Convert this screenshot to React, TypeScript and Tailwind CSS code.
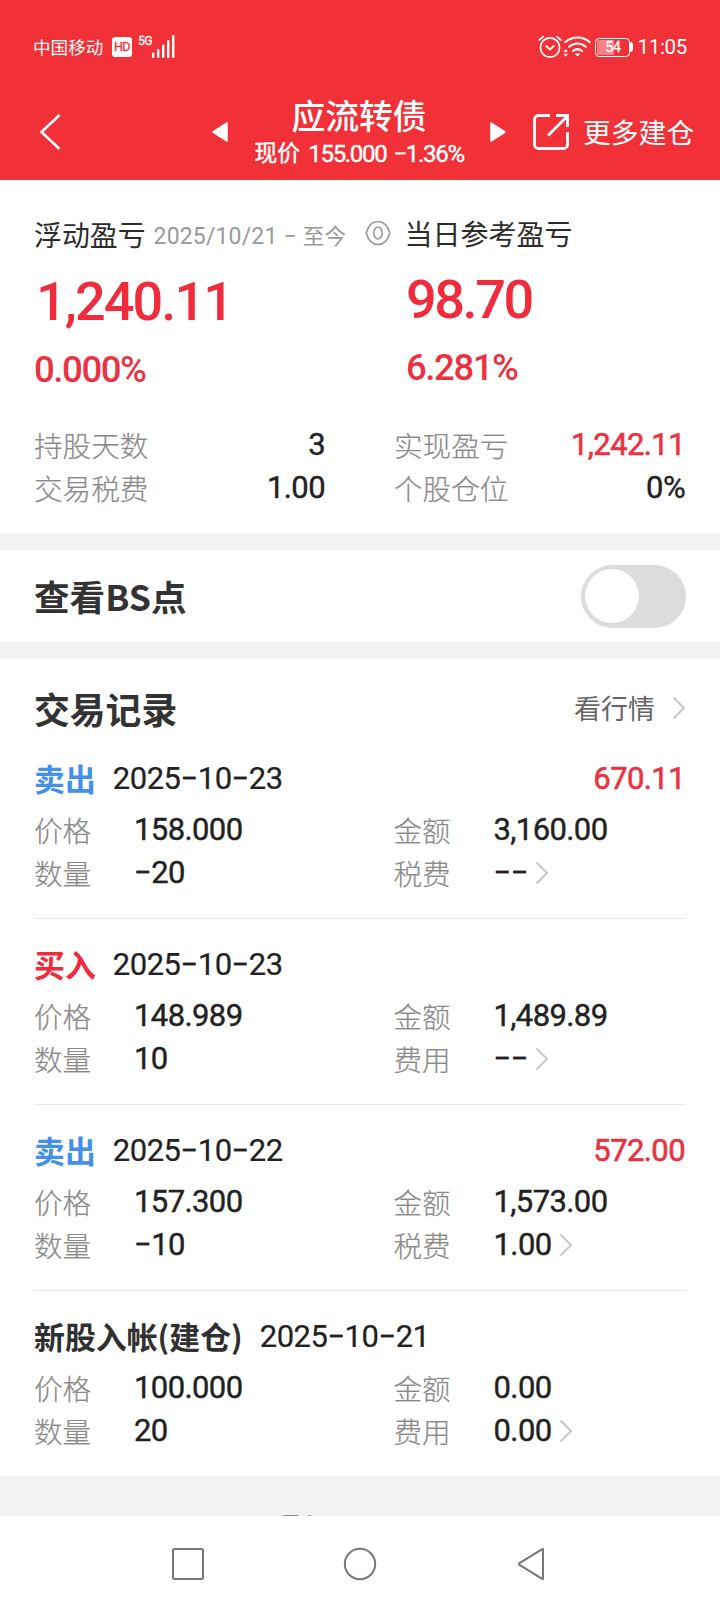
import type { ReactNode } from "react";

const num = "font-['Roboto','Noto_Sans_CJK_SC',sans-serif]";

function Chevron({ className = "" }: { className?: string }) {
  return (
    <svg viewBox="0 0 14 24" className={`h-6 w-3.5 shrink-0 ${className}`} fill="none" stroke="#c8c8c8" strokeWidth="2">
      <path d="M1.5 1.5 12 12 1.5 22.5" />
    </svg>
  );
}

function StatusBar() {
  return (
    <div className="flex h-[94px] items-center pr-[33px] pl-[33px]">
      <span className="text-[17.6px] leading-6">中国移动</span>
      <span className={`ml-[8.6px] flex size-5 items-center justify-center rounded-[3px] bg-white text-[12.5px] tracking-[-0.5px] text-[#f23037] [-webkit-text-stroke:0.3px] ${num}`}>HD</span>
      <span className={`-mt-[13px] ml-[6px] w-[15px] text-[12px] leading-3 tracking-[-0.5px] [-webkit-text-stroke:0.3px] ${num}`}>5G</span>
      <svg viewBox="0 0 24 24" className="-ml-[2px] size-6" fill="white">
        <rect x="1" y="17.5" width="2.4" height="5.5" rx="1" />
        <rect x="6" y="14" width="2.4" height="9" rx="1" />
        <rect x="11" y="9.5" width="2.4" height="13.5" rx="1" />
        <rect x="16" y="5" width="2.4" height="18" rx="1" />
        <rect x="21" y="0" width="2.4" height="23" rx="1" />
      </svg>
      <div className="ml-auto flex items-center">
        <svg viewBox="0 0 24 24" className="mr-px size-6" fill="none" stroke="white" strokeWidth="1.7" strokeLinecap="round">
          <circle cx="12" cy="12.5" r="9.6" />
          <path d="M8.2 11 12 14.500l3.800-3.500M1.200 5 5.200 1.600M22.800 5 18.800 1.600" />
        </svg>
        <svg viewBox="0 0 28 24" className="h-6 w-7" fill="none" stroke="white" strokeWidth="2" strokeLinecap="round">
          <path d="M2.2 7.2c7-6.4 17.600-6.400 24.600 0M6.200 11.800c5-4.500 11.600-4.500 16.600 0M10 16c3-2.500 6-2.500 9 0" />
          <path d="M11.500 18.400h6l-3 3z" fill="white" stroke="none" />
          <path d="M0.500 17l2.200-2.900 2.200 2.900zM0.500 18.800l2.200 2.900 2.200-2.900z" fill="white" stroke="none" />
        </svg>
        <div className="ml-[4px] flex h-[19px] w-[35px] rounded-[4px] border-[1.5px] border-white p-px">
          <div className={`flex w-full items-center justify-center rounded-[2px] bg-[linear-gradient(90deg,#f98185_56%,transparent_56%)] text-[14px] leading-none tracking-[-0.3px] [-webkit-text-stroke:0.3px] ${num}`}>54</div>
        </div>
        <div className="h-2.5 w-[3px] rounded-r-sm bg-white" />
        <span className={`ml-[4px] text-[20.5px] leading-6 tracking-[-0.3px] ${num}`}>11:05</span>
      </div>
    </div>
  );
}

function TitleBar() {
  return (
    <div className="flex h-[86px] items-center pr-6 pl-[39px]">
      <svg viewBox="0 0 22 38" className="mt-[-10px] h-[38px] w-[22px]" fill="none" stroke="white" strokeWidth="2.6">
        <path d="M20.5 2 2.5 19l18 17" />
      </svg>
      <svg viewBox="0 0 16 20" className="mt-[-11px] ml-[151px] h-5 w-4" fill="white" stroke="white" strokeWidth="1.5" strokeLinejoin="round">
        <path d="M15 1v18L1 10z" />
      </svg>
      <div className="mt-[-8px] flex w-[262px] flex-col items-center">
        <h1 className="text-[33.8px] leading-[40px] font-medium">应流转债</h1>
        <p className={`mt-px flex text-[24px] leading-[36px] tracking-[-1.3px] whitespace-pre [-webkit-text-stroke:0.4px] ${num}`}>
          <span className="mr-[8px] text-[23px] tracking-normal">现价</span>155.000<span className="ml-[7px]">−1.36%</span>
        </p>
      </div>
      <svg viewBox="0 0 16 20" className="mt-[-11px] h-5 w-4" fill="white" stroke="white" strokeWidth="1.5" strokeLinejoin="round">
        <path d="M1 1v18l14-9z" />
      </svg>
      <svg viewBox="0 0 38 38" className="mt-[-11px] ml-[26px] size-[38px]" fill="none" stroke="white" strokeWidth="2.8">
        <path d="M18 2.500H6.500a4 4 0 0 0-4 4v25a4 4 0 0 0 4 4h25a4 4 0 0 0 4-4V19M16 22.500 35 3.500M24 2.500h11.500V14" />
      </svg>
      <span className="mt-[-13px] ml-[13px] text-[27.8px] leading-9 whitespace-nowrap">更多建仓</span>
    </div>
  );
}

function Stat({ label, value, red = false }: { label: string; value: string; red?: boolean }) {
  return (
    <div className="flex h-[43px] items-center justify-between">
      <span className="mt-[-4px] text-[28.6px] leading-[43px] font-light text-[#8a8a8a] [-webkit-text-stroke:0.2px]">{label}</span>
      <span
        className={`mt-[-4px] pr-px text-[31px] leading-[43px] tracking-[-0.6px] ${num} ${red ? "text-[#e93343] [-webkit-text-stroke:0.6px]" : "text-[#222] [-webkit-text-stroke:0.4px]"}`}
      >
        {value}
      </span>
    </div>
  );
}

function Summary() {
  return (
    <section className="h-[353px] shrink-0 px-[34px] pt-[31px]">
      <div className="flex h-[44px] items-center text-[#2c2c2c]">
        <span className="mt-px text-[27.9px] leading-[44px]">浮动盈亏</span>
        <span className={`mt-[8px] ml-[8px] flex w-[205px] items-center text-[23px] leading-[44px] tracking-[0.15px] text-[#999] ${num}`}>
          2025/10/21
          <span className="mr-[6px] ml-[6px]">−</span>
          <span className="text-[21.6px]">至今</span>
        </span>
        <svg viewBox="0 0 26 26" className="ml-[6px] size-[26px]" fill="none" stroke="#999" strokeWidth="1.6">
          <path d="M1.200 13C3.500 5 8 1.500 13 1.500S22.500 5 24.800 13C22.500 21 18 24.500 13 24.500S3.500 21 1.200 13z" />
          <ellipse cx="13" cy="13" rx="4.200" ry="6" />
        </svg>
        <span className="ml-[14px] text-[28px] leading-[44px]">当日参考盈亏</span>
      </div>
      <div className={`mt-[2px] flex h-[90px] items-center text-[54px] leading-none font-medium text-[#f02b3c] ${num}`}>
        <span className="w-[372px] pl-[2px] tracking-[-1.9px]">1,240.11</span>
        <span className="mt-[-4px] tracking-[-2.4px]">98.70</span>
      </div>
      <div className={`flex h-[46px] items-center text-[36.5px] leading-none font-medium tracking-[-1.4px] text-[#e93343] ${num}`}>
        <span className="w-[372px]">0.000%</span>
        <span className="mt-[-4px]">6.281%</span>
      </div>
      <div className="mt-[32px] grid grid-cols-[292px_292px] justify-between">
        <Stat label="持股天数" value="3" />
        <Stat label="实现盈亏" value="1,242.11" red />
        <Stat label="交易税费" value="1.00" />
        <Stat label="个股仓位" value="0%" />
      </div>
    </section>
  );
}

function Field({ label, children }: { label: string; children: ReactNode }) {
  return (
    <div className="flex h-[43px] items-center">
      <span className="mt-[-3px] w-[100px] text-[28.6px] leading-[43px] font-light text-[#8a8a8a] [-webkit-text-stroke:0.2px]">{label}</span>
      <span className={`mt-[-2px] flex items-center text-[31px] leading-[43px] tracking-[-0.6px] text-[#222] [-webkit-text-stroke:0.4px] ${num}`}>{children}</span>
    </div>
  );
}

type Trade = {
  kind: string;
  color: string;
  date: string;
  profit?: string;
  price: string;
  amount: string;
  count: string;
  feeLabel: string;
  fee: string;
};

const trades: Trade[] = [
  { kind: "卖出", color: "text-[#448fe8]", date: "2025−10−23", profit: "670.11", price: "158.000", amount: "3,160.00", count: "−20", feeLabel: "税费", fee: "−−" },
  { kind: "买入", color: "text-[#f02b3c]", date: "2025−10−23", price: "148.989", amount: "1,489.89", count: "10", feeLabel: "费用", fee: "−−" },
  { kind: "卖出", color: "text-[#448fe8]", date: "2025−10−22", profit: "572.00", price: "157.300", amount: "1,573.00", count: "−10", feeLabel: "税费", fee: "1.00" },
  { kind: "新股入帐(建仓)", color: "text-[#303030]", date: "2025−10−21", price: "100.000", amount: "0.00", count: "20", feeLabel: "费用", fee: "0.00" },
];

function TradeRow({ t }: { t: Trade }) {
  return (
    <li className="h-[186px] border-b border-[#e9e9e9] pt-[24px] last:border-b-0">
      <div className="flex h-[44px] items-center">
        <span className={`mt-[-3px] text-[30.9px] leading-[44px] font-bold ${t.color}`}>{t.kind}</span>
        <span className={`mt-[-1px] ml-[17px] text-[31px] leading-[44px] tracking-[-0.5px] text-[#222] [-webkit-text-stroke:0.2px] ${num}`}>{t.date}</span>
        {t.profit && (
          <span className={`mt-[-1px] ml-auto pr-px text-[31px] leading-[44px] tracking-[-0.6px] text-[#e93343] [-webkit-text-stroke:0.6px] ${num}`}>{t.profit}</span>
        )}
      </div>
      <div className="mt-[8px] grid grid-cols-[359.5px_1fr]">
        <Field label="价格">{t.price}</Field>
        <Field label="金额">{t.amount}</Field>
        <Field label="数量">{t.count}</Field>
        <Field label={t.feeLabel}>
          {t.fee}
          <Chevron className="mt-px ml-[7px]" />
        </Field>
      </div>
    </li>
  );
}

export default function App() {
  return (
    <div lang="zh-CN" className="flex h-[1612px] w-[720px] flex-col overflow-hidden bg-white font-['Noto_Sans_CJK_SC',sans-serif]">
      <header className="h-[180px] shrink-0 bg-[#f23037] text-white">
        <StatusBar />
        <TitleBar />
      </header>
      <Summary />
      <div className="h-[17px] shrink-0 bg-[#f3f3f3]" />
      <section className="flex h-[92px] shrink-0 items-center justify-between px-[34px]">
        <h2 className="text-[35.6px] leading-[50px] font-bold text-[#333]">查看BS点</h2>
        <div className="flex h-[63px] w-[105px] items-center rounded-full bg-[#dcdcdc] pl-1">
          <div className="size-[54px] rounded-full bg-white" />
        </div>
      </section>
      <div className="h-[17px] shrink-0 bg-[#f3f3f3]" />
      <section className="h-[817px] shrink-0 px-[34px] pt-[24px]">
        <div className="flex h-[50px] items-center">
          <h2 className="text-[35.8px] leading-[50px] font-bold text-[#333]">交易记录</h2>
          <span className="ml-auto text-[27px] leading-[50px] text-[#666]">看行情</span>
          <Chevron className="ml-[17px]" />
        </div>
        <ul>
          {trades.map((t, i) => (
            <TradeRow key={i} t={t} />
          ))}
        </ul>
      </section>
      <div className="flex h-[40px] shrink-0 items-end gap-[10px] bg-[#f3f3f3] pl-[283px]">
        <div className="h-px w-[15px] bg-[#888]" />
        <div className="h-px w-[3px] bg-[#999]" />
      </div>
      <nav className="flex h-[96px] shrink-0 items-center justify-center gap-[138px]">
        <svg viewBox="0 0 34 34" className="size-[34px]" fill="none" stroke="#777" strokeWidth="2">
          <rect x="2" y="2" width="30" height="30" rx="1.5" />
        </svg>
        <svg viewBox="0 0 34 34" className="size-[34px]" fill="none" stroke="#777" strokeWidth="2">
          <circle cx="17" cy="17" r="15.2" />
        </svg>
        <svg viewBox="0 0 34 34" className="size-[34px]" fill="none" stroke="#777" strokeWidth="2" strokeLinejoin="round">
          <path d="M28 2.500v29q0 .8-.8.300L4.500 17.800q-1.200-.8 0-1.600L27.200 2.200q.8-.5.800.3z" />
        </svg>
      </nav>
    </div>
  );
}
